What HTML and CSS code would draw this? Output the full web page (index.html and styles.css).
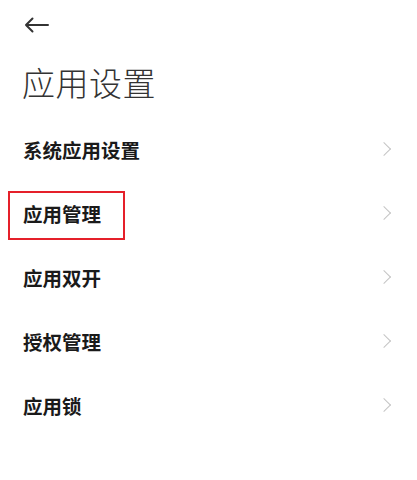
FILE: index.html
```html
<!DOCTYPE html>
<html lang="zh-CN">
<head>
<meta charset="utf-8">
<link rel="stylesheet" href="styles.css">
</head>
<body>
<div class="page">
  <header class="topbar">
    <svg class="back" width="26" height="16" viewBox="0 0 26 16" aria-hidden="true">
      <path d="M2 8H24M8.5 1.5L2 8l6.5 6.5" fill="none" stroke="#333" stroke-width="2" stroke-linecap="round" stroke-linejoin="round"/>
    </svg>
  </header>
  <h1 class="title">应用设置</h1>
  <ul class="list">
    <li class="row"><span class="label">系统应用设置</span><span class="chev"></span></li>
    <li class="row"><span class="label">应用管理</span><span class="chev"></span><span class="highlight"></span></li>
    <li class="row"><span class="label">应用双开</span><span class="chev"></span></li>
    <li class="row"><span class="label">授权管理</span><span class="chev"></span></li>
    <li class="row"><span class="label">应用锁</span><span class="chev"></span></li>
  </ul>
</div>
</body>
</html>
```
FILE: styles.css
```css
html, body {
  margin: 0;
  padding: 0;
  background: #fff;
}
body {
  font-family: "Noto Sans CJK SC", "Noto Sans", sans-serif;
  color: #000;
}
.page {
  width: 417px;
}
.topbar {
  box-sizing: border-box;
  height: 47px;
  display: flex;
  align-items: flex-start;
  padding: 17px 0 0 24px;
}
.back {
  display: block;
}
.title {
  margin: 0;
  padding-left: 22px;
  height: 70px;
  line-height: 70px;
  font-size: 33px;
  font-weight: 300;
  color: #333;
  letter-spacing: 0.5px;
}
.list {
  list-style: none;
  margin: 0;
  padding: 0;
}
.row {
  position: relative;
  height: 64px;
  display: flex;
  align-items: center;
  justify-content: space-between;
  padding: 0 28px 0 23px;
}
.label {
  font-size: 19.5px;
  font-weight: 700;
  color: #1a1a1a;
}
.chev {
  width: 9px;
  height: 9px;
  border-top: 1.5px solid #c4c4c4;
  border-right: 1.5px solid #c4c4c4;
  transform: rotate(45deg);
}
.highlight {
  position: absolute;
  left: 8px;
  top: 10px;
  width: 113px;
  height: 45px;
  border: 2px solid #e5202a;
}
```
